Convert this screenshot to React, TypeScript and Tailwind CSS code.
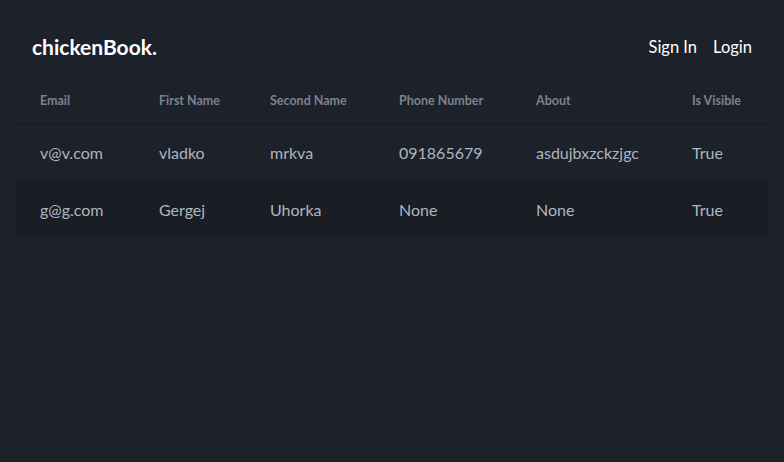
const users = [
  { email: 'v@v.com', first: 'vladko', second: 'mrkva', phone: '091865679', about: 'asdujbxzckzjgc', visible: 'True' },
  { email: 'g@g.com', first: 'Gergej', second: 'Uhorka', phone: 'None', about: 'None', visible: 'True' },
];

const cols = 'grid grid-cols-[119px_111px_129px_137px_156px_1fr]';

export default function App() {
  return (
    <div className="min-h-[462px] w-full bg-[#1d212a] font-['Lato',sans-serif]">
      <nav className="flex items-center justify-between px-8 pt-[33px] pb-[17px]">
        <span className="text-[21px] font-bold leading-7 text-white">chickenBook.</span>
        <div className="flex gap-4 text-[16.5px] leading-7 text-white">
          <a href="#">Sign In</a>
          <a href="#">Login</a>
        </div>
      </nav>
      <div className="mx-4">
        <div className={`${cols} h-[46px] items-center border-b border-[#171a20] pt-[2px] pl-6 text-[12.5px] font-bold text-[#7b8391]`}>
          <span>Email</span>
          <span>First Name</span>
          <span>Second Name</span>
          <span>Phone Number</span>
          <span>About</span>
          <span>Is Visible</span>
        </div>
        {users.map((u, i) => (
          <div
            key={u.email}
            className={`${cols} h-[57px] items-center pl-6 text-base text-[#aeb5c0] ${i % 2 === 1 ? 'bg-[#1a1d24]' : ''}`}
          >
            <span>{u.email}</span>
            <span>{u.first}</span>
            <span>{u.second}</span>
            <span>{u.phone}</span>
            <span>{u.about}</span>
            <span>{u.visible}</span>
          </div>
        ))}
      </div>
    </div>
  );
}
